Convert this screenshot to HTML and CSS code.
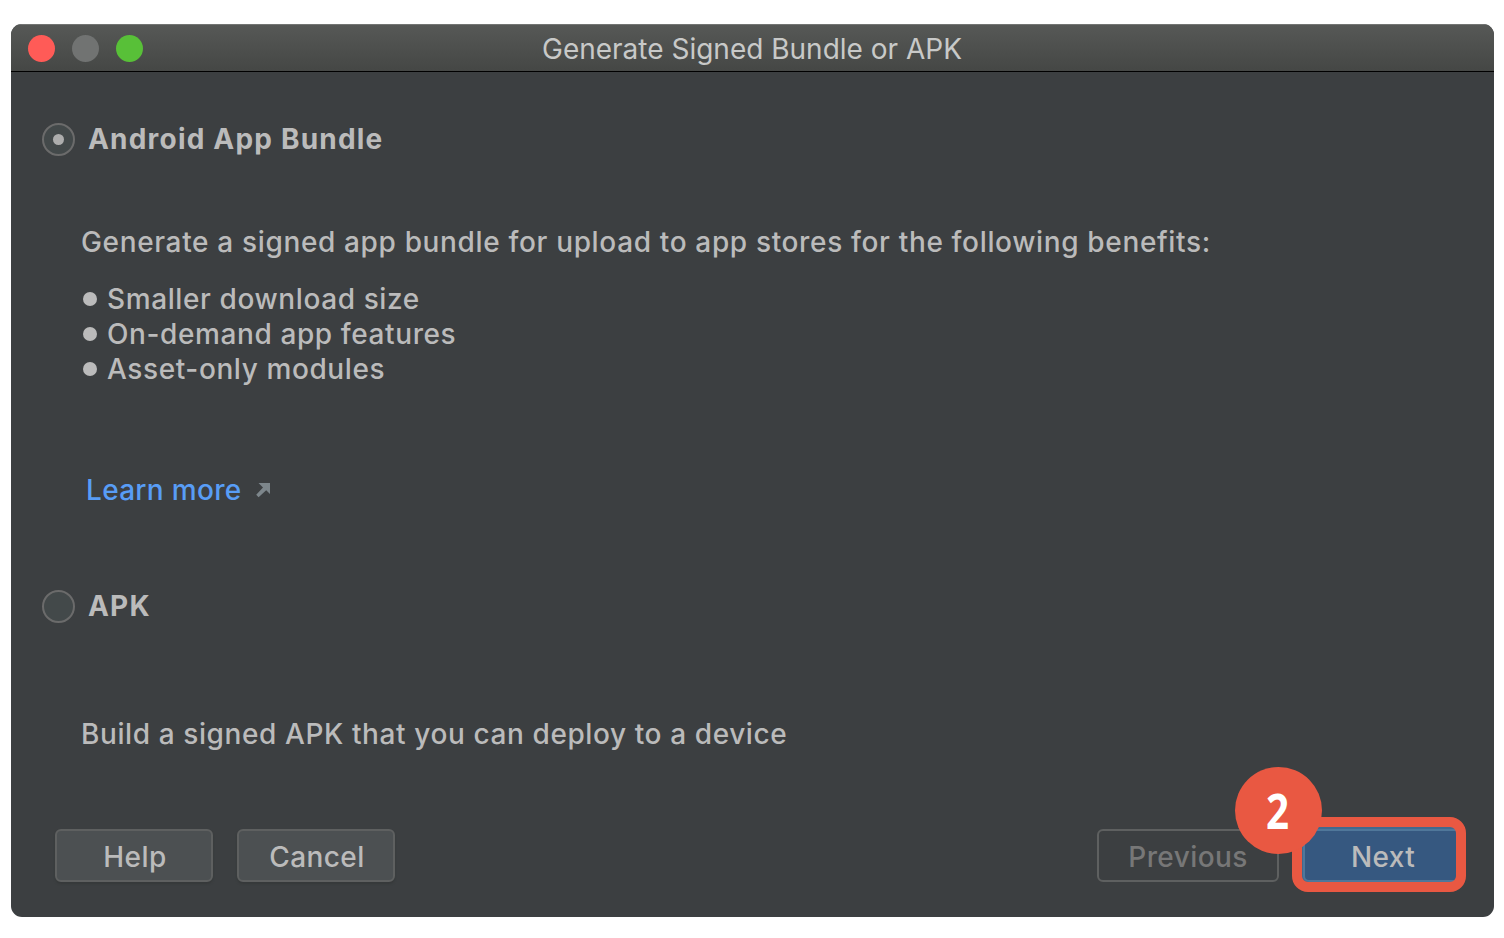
FILE: index.html
```html
<!DOCTYPE html>
<html lang="en">
<head>
  <meta charset="UTF-8">
  <meta name="viewport" content="width=device-width, initial-scale=1">
  <title>Generate Signed Bundle or APK</title>
  <link rel="stylesheet" href="styles.css">
</head>
<body>

  <div class="window">
    <!-- Title bar -->
    <div class="titlebar">
      <div class="lights">
        <span class="light close"></span>
        <span class="light minimize"></span>
        <span class="light zoom"></span>
      </div>
      <h1 class="title">Generate Signed Bundle or APK</h1>
    </div>

    <div class="content">
      <!-- App bundle -->
      <div class="option">
        <span class="radio checked"></span>
        <span class="option-label">Android App Bundle</span>
      </div>
      <div class="details bundle">
        <p class="intro">Generate a signed app bundle for upload to app stores for the following benefits:</p>
        <ul class="benefits">
          <li>Smaller download size</li>
          <li>On-demand app features</li>
          <li>Asset-only modules</li>
        </ul>
        <a class="learn-more" href="#">
          <span>Learn more</span>
          <svg width="16" height="16" viewBox="0 0 16 16">
            <path d="M3.5 1H15V12L11.2 8.2L3.6 15.2L1.2 12.8L8 5.4Z" fill="#7d868b"/>
          </svg>
        </a>
      </div>

      <!-- APK -->
      <div class="option">
        <span class="radio"></span>
        <span class="option-label">APK</span>
      </div>
      <div class="details apk">
        <p class="build">Build a signed APK that you can deploy to a device</p>
      </div>
    </div>

    <!-- Buttons -->
    <div class="footer">
      <button class="btn">Help</button>
      <button class="btn cancel">Cancel</button>
      <button class="btn previous" disabled>Previous</button>
      <div class="next-wrap">
        <button class="btn next">Next</button>
        <span class="highlight"></span>
        <span class="step"><span class="step-number">2</span></span>
      </div>
    </div>
  </div>

</body>
</html>
```

FILE: styles.css
```css
* {
  box-sizing: border-box;
}

body {
  margin: 0;
  padding: 24px 10px 21px 11px;
  background: #fff;
  color: #bbb;
  font-family: Inter, Roboto, sans-serif;
  font-size: 28px;
  font-weight: 450;
}

p, ul, h1 {
  margin: 0;
  padding: 0;
}

.window {
  display: flex;
  flex-direction: column;
  height: 893px;
  background: #3c3f41;
  border-radius: 11px;
  overflow: hidden;
}

/* title bar */
.titlebar {
  display: grid;
  grid-template-columns: 1fr auto 1fr;
  align-items: center;
  height: 48px;
  padding: 0 18px 0 17px;
  background: linear-gradient(#565856, #454745);
  border-top: 1px solid #737573;
  border-bottom: 1px solid #000;
}

.lights {
  display: flex;
  gap: 17px;
}

.light {
  width: 27px;
  height: 27px;
  border-radius: 50%;
}

.close { background: #ff5b57; }
.minimize { background: #717372; }
.zoom { background: #58c038; }

.title {
  font-size: 28px;
  font-weight: 400;
  line-height: 34px;
  color: #c8c9c8;
  padding-top: 1px;
}

/* options */
.content {
  flex: 1;
  padding: 50px 30px 0 31px;
}

.option {
  display: flex;
  align-items: center;
  gap: 13px;
  height: 34px;
}

.radio {
  display: flex;
  align-items: center;
  justify-content: center;
  width: 33px;
  height: 33px;
  border: 2px solid #6b6b6b;
  border-radius: 50%;
  background: #43494a;
}

.radio.checked::after {
  content: "";
  width: 11px;
  height: 11px;
  border-radius: 50%;
  background: #adadad;
}

.option-label {
  font-weight: 700;
  line-height: 34px;
  letter-spacing: 1.2px;
}

.details {
  display: flex;
  flex-direction: column;
  align-items: flex-start;
  padding-left: 39px;
  line-height: 35px;
  letter-spacing: 0.6px;
  white-space: nowrap;
}

.bundle {
  height: 433px;
  padding-top: 69px;
}

.intro {
  letter-spacing: 0.65px;
}

.benefits {
  list-style: none;
  margin-top: 22px;
}

.benefits li {
  display: flex;
  align-items: center;
  gap: 10px;
  padding-left: 2px;
}

.benefits li::before {
  content: "";
  width: 14px;
  height: 14px;
  border-radius: 50%;
  background: #bbb;
  margin-top: -2px;
}

.learn-more {
  display: flex;
  align-items: center;
  gap: 14px;
  margin-top: 86px;
  padding-left: 5px;
  color: #589df6;
  letter-spacing: 0.3px;
  text-decoration: none;
}

.learn-more svg {
  margin-top: -2px;
}

.apk {
  padding-top: 94px;
}

/* buttons */
.footer {
  display: flex;
  align-items: center;
  height: 53px;
  margin-bottom: 35px;
  padding: 0 31px 0 44px;
}

.btn {
  width: 158px;
  height: 53px;
  padding: 2px 0 0 2px;
  border: 2px solid #5e6060;
  border-radius: 6px;
  background: #4c5052;
  box-shadow: 0 2px 2px #36393a;
  color: #bbb;
  font-family: inherit;
  font-size: 28px;
  font-weight: inherit;
  letter-spacing: 0.4px;
  line-height: 34px;
}

.cancel {
  margin-left: 24px;
}

.previous {
  width: 182px;
  margin-left: auto;
  padding-left: 0;
  background: transparent;
  box-shadow: none;
  color: #777;
}

.next-wrap {
  position: relative;
  margin-left: 24px;
}

.next {
  width: 160px;
  display: block;
  padding-left: 0;
  border: 2px solid #50779a;
  background: #365880;
  box-shadow: 0 0 0 2px #43698e;
}

/* callout over the Next button */
.highlight {
  position: absolute;
  left: -11px;
  top: -12px;
  width: 174px;
  height: 75px;
  border: 10px solid #e95842;
  border-radius: 16px;
}

.step {
  position: absolute;
  left: -68px;
  top: -62px;
  width: 87px;
  height: 87px;
  border-radius: 50%;
  background: #e95842;
  color: #fff;
  font-family: "Noto Sans", sans-serif;
  font-size: 48px;
  font-weight: 700;
  line-height: 88px;
  text-align: center;
}

.step-number {
  display: block;
  margin-left: -2px;
  transform: scaleX(0.84);
}
```
